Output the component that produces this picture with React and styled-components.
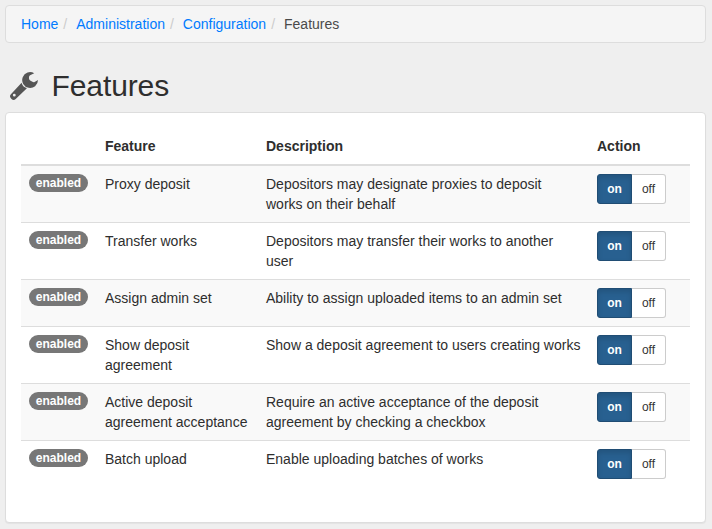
import React from "react";
import styled, { createGlobalStyle, css } from "styled-components";

const GlobalStyle = createGlobalStyle`
  *, *::before, *::after { box-sizing: border-box; }
  body {
    margin: 0;
    background: #efefef;
    color: #2e2e2e;
    font: 14px/20px "Liberation Sans", Arial, sans-serif;
  }
`;

const Page = styled.main`
  min-height: 529px;
  padding: 5px 6px 0 5px;
`;

const Breadcrumb = styled.ol`
  display: flex;
  margin: 0;
  padding: 8px 15px;
  list-style: none;
  background: #f5f5f5;
  border: 1px solid #dddddd;
  border-radius: 4px;
`;

const Crumb = styled.li`
  color: #4a4a4a;
  & + &::before {
    content: "/";
    padding: 0 9px 0 5px;
    color: #cccccc;
  }
`;

const CrumbLink = styled.a`
  color: #007bff;
  text-decoration: none;
`;

const Heading = styled.h1`
  display: flex;
  align-items: center;
  gap: 13.5px;
  height: 33px;
  margin: 26px 0 10px 5px;
  font-size: 30px;
  font-weight: 400;
  line-height: 33px;
  letter-spacing: -0.1px;
`;

const WrenchSvg = styled.svg`
  flex: none;
  width: 28px;
  height: 28px;
  fill: #555555;
`;

const Panel = styled.section`
  height: 411px;
  padding: 15px;
  background: #ffffff;
  border: 1px solid #dddddd;
  border-radius: 4px;
  box-shadow: 0 1px 1px rgba(0, 0, 0, 0.05);
`;

const columns = css`
  display: grid;
  grid-template-columns: 76px 161px 331px 101px;
`;

const HeaderRow = styled.div`
  ${columns}
  font-weight: 700;
  border-bottom: 2px solid #dddddd;
`;

const FeatureRow = styled.div`
  ${columns}
  background: ${({ $striped }) => ($striped ? "#f9f9f9" : "#ffffff")};
  & + & { border-top: 1px solid #dddddd; }
`;

const Cell = styled.div`
  padding: 8px;
  white-space: pre-line;
`;

const BadgeCell = styled(Cell)`
  display: flex;
  align-items: flex-start;
`;

const Badge = styled.span`
  width: 59px;
  height: 18px;
  border-radius: 10px;
  background: #777777;
  color: #ffffff;
  font-size: 12px;
  font-weight: 700;
  line-height: 18px;
  text-align: center;
`;

const Toggle = styled.div`
  display: flex;
`;

const ToggleButton = styled.button`
  width: 34px;
  height: 30px;
  padding: 0;
  font: 12px/18px "Liberation Sans", Arial, sans-serif;
  color: #333333;
  background: #ffffff;
  border: 1px solid #cccccc;
  border-left: 0;
  border-radius: 0 3px 3px 0;
  cursor: pointer;
  ${({ $active }) => $active && css`
    width: 35px;
    color: #ffffff;
    font-weight: 700;
    background: #286090;
    border: 1px solid #204d74;
    border-radius: 3px 0 0 3px;
    box-shadow: inset 0 3px 5px rgba(0, 0, 0, 0.125);
  `}
`;

function Wrench() {
  return (
    <WrenchSvg viewBox="0 0 28 28" aria-hidden="true">
      <path d="M24.2 1.3A7.9 7.9 0 1 0 28 8.1L24.6 10Q23.5 10.5 22.4 9.8L20.1 8.5Q19 7.8 19 6.6V5.2Q19 3.9 20.1 3.2Z" />
      <path
        fillRule="evenodd"
        d="M11.6 10.8Q12.4 14.8 16.9 16.3L5.7 27Q3.6 29 1.5 27L.9 26.3Q-.9 24.4.9 22.3ZM4.3 21.8a1.4 1.4 0 1 0 0 2.8a1.4 1.4 0 1 0 0-2.8Z"
      />
    </WrenchSvg>
  );
}

const features = [
  ["Proxy deposit", "Depositors may designate proxies to deposit\nworks on their behalf"],
  ["Transfer works", "Depositors may transfer their works to another\nuser"],
  ["Assign admin set", "Ability to assign uploaded items to an admin set"],
  ["Show deposit\nagreement", "Show a deposit agreement to users creating works"],
  ["Active deposit\nagreement acceptance", "Require an active acceptance of the deposit\nagreement by checking a checkbox"],
  ["Batch upload", "Enable uploading batches of works"],
];

export default function App() {
  return (
    <>
      <GlobalStyle />
      <Page>
        <Breadcrumb>
          {["Home", "Administration", "Configuration"].map((name) => (
            <Crumb key={name}><CrumbLink href="#">{name}</CrumbLink></Crumb>
          ))}
          <Crumb>Features</Crumb>
        </Breadcrumb>
        <Heading><Wrench />Features</Heading>
        <Panel>
          <HeaderRow>
            <Cell />
            <Cell>Feature</Cell>
            <Cell>Description</Cell>
            <Cell>Action</Cell>
          </HeaderRow>
          {features.map(([name, description], index) => (
            <FeatureRow key={name} $striped={index % 2 === 0}>
              <BadgeCell><Badge>enabled</Badge></BadgeCell>
              <Cell>{name}</Cell>
              <Cell>{description}</Cell>
              <Cell>
                <Toggle>
                  <ToggleButton $active>on</ToggleButton>
                  <ToggleButton>off</ToggleButton>
                </Toggle>
              </Cell>
            </FeatureRow>
          ))}
        </Panel>
      </Page>
    </>
  );
}
